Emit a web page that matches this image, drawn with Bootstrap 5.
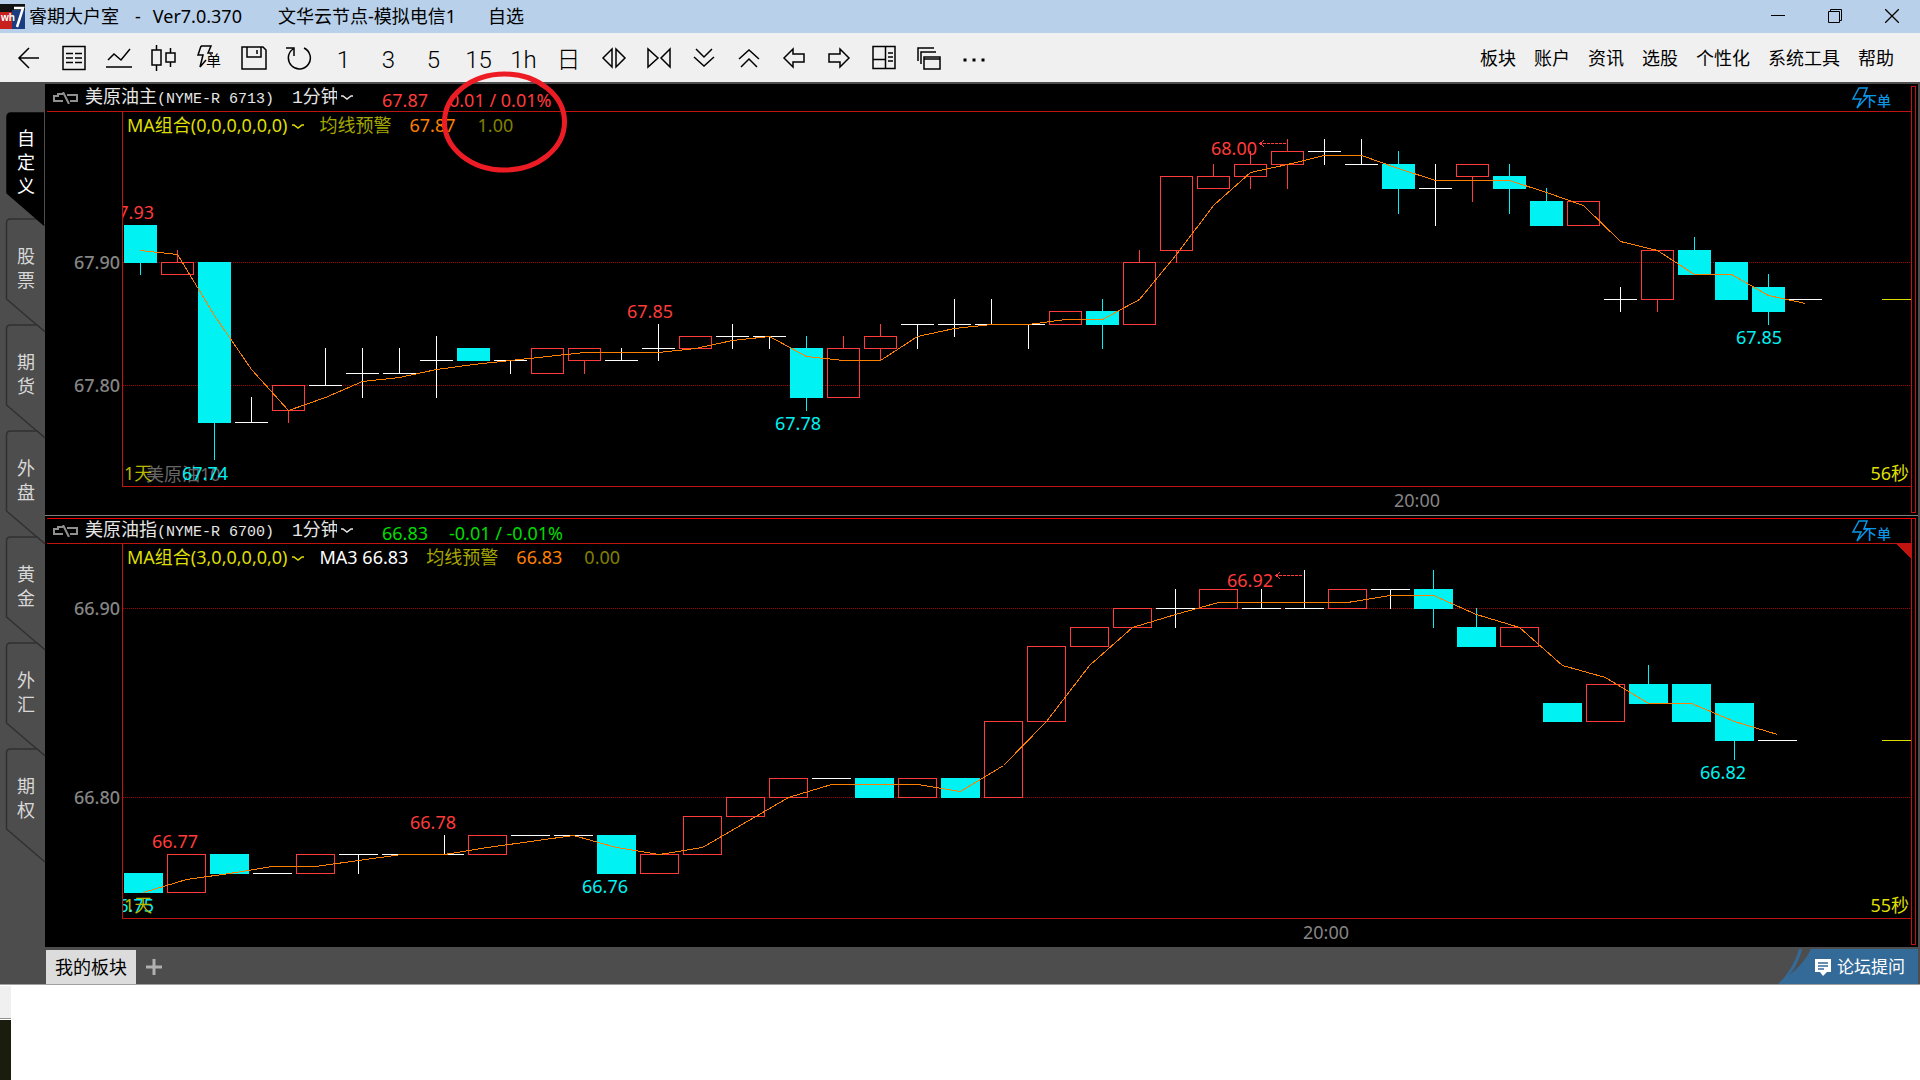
<!DOCTYPE html>
<html lang="zh-CN">
<head>
<meta charset="utf-8">
<meta name="viewport" content="width=device-width, initial-scale=1">
<title>睿期大户室</title>
<link href="https://cdn.jsdelivr.net/npm/bootstrap@5.3.0/dist/css/bootstrap.min.css" rel="stylesheet">
<style>
  :root { --panel-grey: #4d4d4d; --axis-red: #c01410; --up: #ff3b3b; --down: #00f2f2; --orange: #ff8000; --yellow: #dede00; }
  body { font-family: "Noto Sans", "Noto Sans CJK SC", sans-serif; font-size: 18px; line-height: 24px; color: #000; background: #fff; }
  button, select { font: inherit; color: inherit; background: none; border: 0; padding: 0; }
  svg { display: block; flex: none; }
  .ico { fill: none; stroke: currentColor; stroke-width: 1.5; }

  .title-bar { height: 33px; background: #b9d0ea; padding-bottom: 1px; }
  .server-name { margin-left: 36px; }
  .win-btn { width: 57px; height: 32px; }

  .tool-bar { height: 49px; background: #f0f0f0; padding-left: 6px; }
  .tool-btn { width: 45px; height: 40px; padding-top: 1px; }
  .tool-num { font-family: Roboto, "Noto Sans CJK SC", sans-serif; font-weight: 300; font-size: 24px; padding-top: 4px; }
  .menu-links { gap: 18px; padding-right: 26px; }
  .menu-link { color: #000; text-decoration: none; }

  .workspace { background: var(--panel-grey); padding-top: 2px; }
  .side-tabs { width: 45px; padding-top: 28px; }
  .side-tab { position: relative; height: 106px; width: 45px; padding: 0 0 6px 7px; line-height: 24px; color: #d8d8d8; }
  .side-tab svg { position: absolute; left: 0; top: 0; overflow: visible; fill: var(--panel-grey); stroke: #303030; stroke-width: 1.5; }
  .side-tab span { position: relative; width: 18px; }
  .side-tab.active { z-index: 1; color: #fff; }
  .side-tab.active svg { fill: #000; stroke: #000; }

  .quotes { background: #000; margin-right: 2px; min-width: 0; }
  .quote-panel { padding: 0 2px; }
  .quote-panel + .quote-panel { border-top: 1px solid #808080; padding-top: 2px; }
  .panel-focus { border-top: 1px solid #f00000; }
  .rail { width: 5px; border: 1px solid var(--axis-red); margin: 2px 0; }
  .panel-focus .rail { margin-top: 0; border-top: 0; }
  .quote-head { height: 28px; border-bottom: 1px solid var(--axis-red); padding-left: 6px; padding-right: 20px; color: #e6e6e6; }
  .panel-focus .quote-head { height: 25px; }
  .contract { width: 207px; margin-left: 7px; white-space: nowrap; }
  .contract span { font-family: "Liberation Mono", monospace; font-size: 15px; }
  .period { width: 90px; }
  .period select { appearance: none; width: 45px; color: #e6e6e6; font-family: "Liberation Mono", "Noto Sans CJK SC", monospace; }
  .last { width: 67px; }
  .figures { padding-top: 4px; }
  .rise { color: var(--up); }
  .fall { color: #00dc00; }
  .order-btn { color: #0a96e6; }
  .order-btn text { font-size: 14px; font-weight: 500; fill: currentColor; stroke: none; }
  .plot-area { display: grid; }
  .plot-area > * { grid-area: 1 / 1; }
  .plot { width: 100%; height: 403px; shape-rendering: crispEdges; }
  .plot text { font-size: 18px; }
  .plot .price { font-weight: 500; fill: #858585; }
  .indicators { align-self: start; padding: 1px 0 0 80px; white-space: nowrap; color: var(--yellow); }
  .indicators > * { margin-right: 18px; }
  .indicators .dim { color: #a6a600; }

  .foot-bar { height: 38px; background: var(--panel-grey); border-bottom: 1px solid #a0a0a0; padding: 3px 2px 0 46px; }
  .foot-tab { width: 90px; background: #dcdcdc; color: #000; }
  .foot-add { width: 36px; color: #b0b0b0; }
  .forum { color: #fff; text-decoration: none; font-size: 17px; width: 140px; position: relative; }
  .forum svg.shape { position: absolute; right: 0; bottom: 0; }
  .forum .caption { position: relative; padding-right: 13px; gap: 6px; }
  .marker { position: absolute; left: 442px; top: 71px; pointer-events: none; z-index: 5; }
  .desk-edge { width: 11px; padding-top: 1px; }
  .desk-strip { height: 33px; background: #f0f0f0; border-bottom: 1px solid #909090; margin-bottom: 1px; }
  .desk-dark { height: 60px; background: #1a1c0e; }
</style>
<script src="https://cdn.jsdelivr.net/npm/bootstrap@5.3.0/dist/js/bootstrap.bundle.min.js"></script>
</head>
<body class="overflow-hidden position-relative">

<header class="title-bar d-flex align-items-center">
  <svg width="25" height="25" viewBox="0 0 25 25"><rect width="13" height="25" fill="#c8201c"/><rect width="12" height="8" fill="#111"/><rect x="12" width="13" height="25" fill="#1c3c80"/><rect x="12" width="13" height="6" fill="#111"/><text x="1" y="17" font-size="10" font-weight="700" font-family="Liberation Sans, sans-serif" fill="#fff">wh</text><path d="M14 4h9l-6 19" fill="none" stroke="#fff" stroke-width="2.500"/></svg>
  <span class="ms-1">睿期大户室</span><span class="ms-3">-</span><span class="ms-2 ps-1">Ver7.0.370</span>
  <span class="server-name">文华云节点-模拟电信1</span><span class="ms-4 ps-2">自选</span>
  <div class="ms-auto d-flex">
    <button class="win-btn d-flex align-items-center justify-content-center" aria-label="最小化"><svg width="14" height="14" stroke="#000"><path d="M0 6.500h14"/></svg></button>
    <button class="win-btn d-flex align-items-center justify-content-center" aria-label="还原"><svg width="14" height="14" fill="none" stroke="#000"><path d="M.5 2.500h11v11h-11zM2.500 2.500v-2h11v11h-2"/></svg></button>
    <button class="win-btn d-flex align-items-center justify-content-center" aria-label="关闭"><svg width="14" height="14" stroke="#000" stroke-width="1.300"><path d="M0 0l14 14M14 0L0 14"/></svg></button>
  </div>
</header>

<nav class="tool-bar d-flex align-items-center">
  <div class="d-flex" id="tools"></div>
  <div class="menu-links ms-auto d-flex">
    <a class="menu-link" href="#">板块</a><a class="menu-link" href="#">账户</a><a class="menu-link" href="#">资讯</a><a class="menu-link" href="#">选股</a><a class="menu-link" href="#">个性化</a><a class="menu-link" href="#">系统工具</a><a class="menu-link" href="#">帮助</a>
  </div>
</nav>

<main class="workspace d-flex">
  <div class="side-tabs d-flex flex-column" id="sideTabs"></div>
  <div class="quotes flex-grow-1">

    <section class="quote-panel">
      <div class="d-flex">
        <div class="flex-grow-1">
          <div class="quote-head d-flex align-items-center">
            <svg class="ico" width="25" height="12" style="color:#909090"><path stroke-width="2" d="M10 2H5v2H1v5h9M10 0l6 12M14 3h10v6h-7"/></svg>
            <div class="contract">美原油主<span>(NYME-R 6713)</span></div>
            <div class="period d-flex align-items-center"><select aria-label="周期"><option>1分钟</option></select><svg class="ico ms-1" width="12" height="6"><path d="M0 1h2l4 3 4-3h2"/></svg></div>
            <div class="last figures rise">67.87</div><div class="figures rise">0.01 / 0.01%</div>
            <button class="order-btn ms-auto" aria-label="下单"><svg class="ico" width="39" height="24"><path d="M7 2h8l-3 8h4L5 22l4-9H1z"/><text x="11" y="20">下单</text></svg></button>
          </div>
          <div class="plot-area">
            <svg class="plot" id="plot1"></svg>
            <div class="indicators d-flex align-items-center">
              <button class="d-flex align-items-center me-3">MA组合(0,0,0,0,0,0)<svg class="ico ms-1 mt-1" width="12" height="6"><path d="M0 1h2l4 3 4-3h2"/></svg></button>
              <span class="dim">均线预警</span><span style="color:var(--orange)">67.87</span><span class="ms-1" style="color:#808000">1.00</span>
            </div>
          </div>
        </div>
        <div class="rail"></div>
      </div>
    </section>

    <section class="quote-panel">
      <div class="panel-focus d-flex">
        <div class="flex-grow-1">
          <div class="quote-head d-flex align-items-center">
            <svg class="ico" width="25" height="12" style="color:#909090"><path stroke-width="2" d="M10 2H5v2H1v5h9M10 0l6 12M14 3h10v6h-7"/></svg>
            <div class="contract">美原油指<span>(NYME-R 6700)</span></div>
            <div class="period d-flex align-items-center"><select aria-label="周期"><option>1分钟</option></select><svg class="ico ms-1" width="12" height="6"><path d="M0 1h2l4 3 4-3h2"/></svg></div>
            <div class="last figures fall">66.83</div><div class="figures fall">-0.01 / -0.01%</div>
            <button class="order-btn ms-auto" aria-label="下单"><svg class="ico" width="39" height="24"><path d="M7 2h8l-3 8h4L5 22l4-9H1z"/><text x="11" y="20">下单</text></svg></button>
          </div>
          <div class="plot-area">
            <svg class="plot" id="plot2"></svg>
            <div class="indicators d-flex align-items-center">
              <button class="d-flex align-items-center me-3">MA组合(3,0,0,0,0,0)<svg class="ico ms-1 mt-1" width="12" height="6"><path d="M0 1h2l4 3 4-3h2"/></svg></button>
              <span class="text-white">MA3 66.83</span><span class="dim">均线预警</span><span style="color:var(--orange)">66.83</span><span class="ms-1" style="color:#808000">0.00</span>
            </div>
          </div>
        </div>
        <div class="rail"></div>
      </div>
    </section>
  </div>
</main>

<footer class="foot-bar d-flex">
  <button class="foot-tab">我的板块</button>
  <button class="foot-add d-flex align-items-center justify-content-center" aria-label="新建"><svg width="16" height="16" stroke="currentColor" stroke-width="3"><path d="M8 0v16M0 8h16"/></svg></button>
  <a class="forum ms-auto d-flex align-items-center justify-content-end" href="#">
    <svg class="shape" width="140" height="35" viewBox="0 0 140 35"><path fill="#336a98" d="M33 0h107v35H0C9 27 17 14 21 0h3C22 9 17 20 11 26 20 20 28 10 33 0z"/></svg>
    <span class="caption d-flex align-items-center"><svg width="16" height="17"><path fill="#fff" d="M0 0h16v13h-4l-4 4-3-4H0z"/><path stroke="#336a98" stroke-width="1.500" d="M3 4h10M3 7h10M3 10h6"/></svg>论坛提问</span>
  </a>
</footer>
<div class="desk-edge"><div class="desk-strip"></div><div class="desk-dark"></div></div>

<svg class="marker" width="126" height="103"><ellipse cx="62.500" cy="51" rx="60" ry="48" fill="none" stroke="#ed1c24" stroke-width="5"/></svg>

<script>
// Toolbar: an entry is either a plain caption or the path of a 26x26 icon.
const tools = [
  ['后退', 'M23 13H3M13 3L3 13l10 10'],
  ['报价', 'M2 1.500h22v23H2zM5 8.500h7M14 8.500h7M5 13h7M14 13h7M5 17.500h7M14 17.500h7'],
  ['分时', 'M0 22h26M2 15l6-6 7 6L24 4'],
  ['K线', 'M1 5h9v15H1zM5.500 0v5M5.500 20v6M15 8h9v9h-9zM19.500 3v5M19.500 17v5'],
  ['画线下单', 'M5 1h10l-3 7h5M5 1L2 10h5L4 22l6-7', '单'],
  ['保存', 'M1 2h21l3 3v19H1zM6 2v10h14V2M16 5v4'],
  ['刷新', 'M18 3a11 11 0 1 1-11 1M0 3h8v8'],
  '1', '3', '5', '15', '1h', '日',
  ['放大', 'M11 4v18L2 13zM15 4v18l9-9z'],
  ['缩小', 'M2 4v18l10-9zM24 4v18l-9-9z'],
  ['向下', 'M5 4l8 8 8-8M3 12l10 9 10-9'],
  ['向上', 'M5 22l8-8 8 8M3 14l10-9 10 9'],
  ['向左', 'M3 13l9-9v5h11v8H12v5z'],
  ['向右', 'M23 13l-9-9v5H3v8h11v5z'],
  ['布局', 'M2 1.500h22v22H2zM14.500 1v22M2 14.500h12M17 8h5M17 12h5M17 16h5'],
  ['窗口', 'M2 16V3h16M5 19V7h15M8 12h16v12H8zM8 14h16'],
  ['更多', 'M2.500 15h3M11.500 15h3M20.500 15h3']
];
document.getElementById('tools').innerHTML = tools.map(t => {
  const cls = 'tool-btn d-flex align-items-center justify-content-center';
  if (typeof t === 'string') return `<button class="${cls} tool-num">${t}</button>`;
  const w = t[0] === '更多' ? 3 : 1.5;
  const cap = t[2] ? `<text x="10" y="21" font-size="15" fill="#000" stroke="none">${t[2]}</text>` : '';
  return `<button class="${cls}" aria-label="${t[0]}"><svg class="ico" width="26" height="26"><path stroke-width="${w}" d="${t[1]}"/>${cap}</svg></button>`;
}).join('');

document.getElementById('sideTabs').innerHTML = ['自定义', '股票', '期货', '外盘', '黄金', '外汇', '期权'].map((name, i) => {
  const d = i ? 'M45 114L6.500 81V5q0-4 4-4H37L45 8' : 'M44 113L7 81V5q0-4 4-4H44';
  return `<button class="side-tab d-flex align-items-center justify-content-center${i ? '' : ' active'}"><svg width="45" height="114"><path d="${d}"/></svg><span>${name}</span></button>`;
}).join('');

// Candles are [open, close, high, low] in hundredths above the base price.
const charts = [
  { id: 'plot1', base: 67, step: 37, half: 16, first: 93.5, y90: 150, unit: 12.3, lead: [91, 90.67], last: 87,
    candles: [[93,90,93,89],[89,90,91,89],[90,77,90,74],[77,77,79,77],[78,80,80,77],[80,80,83,80],[81,81,83,79],[81,81,83,81],[82,82,84,79],[83,82,83,82],[82,82,82,81],[81,83,83,81],[82,83,83,81],[82,82,83,82],[83,83,85,82],[83,84,84,83],[84,84,85,83],[84,84,84,83],[83,79,84,78],[79,83,84,79],[83,84,85,82],[85,85,85,83],[85,85,87,84],[85,85,87,85],[85,85,85,83],[85,86,86,85],[86,85,87,83],[85,90,91,85],[91,97,97,90],[96,97,98,96],[97,98,99,96],[98,99,100,96],[99,99,100,98],[98,98,100,98],[98,96,99,94],[96,96,98,93],[97,98,98,95],[97,96,98,94],[95,93,96,93],[93,95,95,93],[87,87,88,86],[87,91,91,86],[91,89,92,89],[90,87,90,87],[88,86,89,85],[87,87,87,87]],
    labels: [['67.93',84,107,'up'],['67.74',158,368,'down'],['67.85',603,206,'up'],['67.78',751,318,'down'],['68.00',1187,43,'up'],['67.85',1712,232,'down']],
    arrow: [1212, 1240, 31.5], time: 1370, note: '美原油10', countdown: '56秒' },
  { id: 'plot2', base: 66, step: 43, half: 19, first: 96.5, y90: 64, unit: 18.9, lead: [75, 75.67], last: 83,
    candles: [[76,75,76,75],[75,77,77,75],[77,76,77,76],[76,76,76,76],[76,77,77,76],[77,77,77,76],[77,77,77,77],[77,77,78,77],[77,78,78,77],[78,78,78,78],[78,78,78,78],[78,76,78,76],[76,77,77,76],[77,79,79,77],[79,80,80,79],[80,81,81,80],[81,81,81,81],[81,80,81,80],[80,81,81,80],[81,80,81,80],[80,84,84,80],[84,88,88,84],[88,89,89,88],[89,90,90,89],[90,90,91,89],[90,91,91,90],[90,90,91,90],[90,90,92,90],[90,91,91,90],[91,91,91,90],[91,90,92,89],[89,88,90,88],[88,89,89,88],[85,84,85,84],[84,86,86,84],[86,85,87,85],[86,84,86,84],[85,83,85,82],[83,83,83,83]],
    labels: [['66.75',84,368,'down'],['66.77',128,304,'up'],['66.78',386,285,'up'],['66.76',558,349,'down'],['66.92',1203,43,'up'],['66.82',1676,235,'down']],
    arrow: [1228, 1256, 31.5], time: 1279, countdown: '55秒', corner: true }
];

function draw(c) {
  const svg = document.getElementById(c.id), w = svg.clientWidth, bottom = 374.5, axis = 75.5;
  const y = v => Math.round(c.y90 + (90 - v) * c.unit) + 0.5;
  const line = (x1, y1, x2, y2, col, more = '') => `<path d="M${x1} ${y1}L${x2} ${y2}" stroke="${col}" ${more}/>`;
  const text = (s, x, cy, fill, anchor = 'middle', cls = '') => `<text x="${x}" y="${cy}" text-anchor="${anchor}" fill="${fill}" class="${cls}">${s}</text>`;
  let s = `<clipPath id="${c.id}c"><rect x="76" y="0" width="${w - 76}" height="374"/></clipPath>`;
  [90, 80].forEach(v => {
    s += line(76, y(v), w, y(v), '#a00000', 'stroke-dasharray="1 1"');
    s += text(c.base + '.' + v, 73, y(v) + 6.5, '#858585', 'end', 'price');
  });
  if (c.note) s += text(c.note, 99, 369, '#666', 'start');
  c.candles.forEach(([o, cl, hi, lo], i) => {
    const x = c.first + i * c.step, top = y(Math.max(o, cl)), bot = y(Math.min(o, cl));
    const col = o === cl ? '#fff' : cl > o ? 'var(--up)' : 'var(--down)';
    if (y(hi) < top) s += line(x, y(hi) - 0.5, x, top, col);
    if (y(lo) > bot) s += line(x, bot, x, y(lo) + 0.5, col);
    s += o === cl ? line(x - c.half - 0.5, top, x + c.half + 0.5, top, col)
      : `<rect x="${x - c.half}" y="${top}" width="${2 * c.half}" height="${bot - top}" stroke="${col}" fill="${cl > o ? 'none' : col}"/>`;
  });
  const ma = c.candles.map((k, i) => {
    const v = i < 2 ? c.lead[i] : (k[1] + c.candles[i - 1][1] + c.candles[i - 2][1]) / 3;
    return (c.first + i * c.step) + ',' + y(v);
  });
  s += `<polyline points="${ma.join(' ')}" fill="none" stroke="var(--orange)"/>`;
  s += `<g clip-path="url(#${c.id}c)">` + c.labels.map(l => text(l[0], l[1], l[2], `var(--${l[3]})`)).join('') + '</g>';
  const [ax, bx, ay] = c.arrow;
  s += line(ax, ay, bx, ay, 'var(--up)', 'stroke-dasharray="3 1"') + `<path d="M${ax + 5} ${ay - 3}l-4 3 4 3" fill="none" stroke="var(--up)"/>`;
  s += line(w - 29, y(c.last), w, y(c.last), 'var(--yellow)');
  s += text('1天', 77, 368, '#b8b800', 'start') + text(c.countdown, w - 2, 368, 'var(--yellow)', 'end');
  s += text('20:00', c.time, 395, '#858585');
  if (c.corner) s += `<path d="M${w - 15} 0H${w}V15z" fill="var(--axis-red)"/>`;
  s += `<path d="M${axis} 0V${bottom}H${w}" fill="none" stroke="var(--axis-red)"/>`;
  svg.innerHTML = s;
}
const drawAll = () => charts.forEach(draw);
drawAll();
addEventListener('resize', drawAll);
</script>
</body>
</html>
